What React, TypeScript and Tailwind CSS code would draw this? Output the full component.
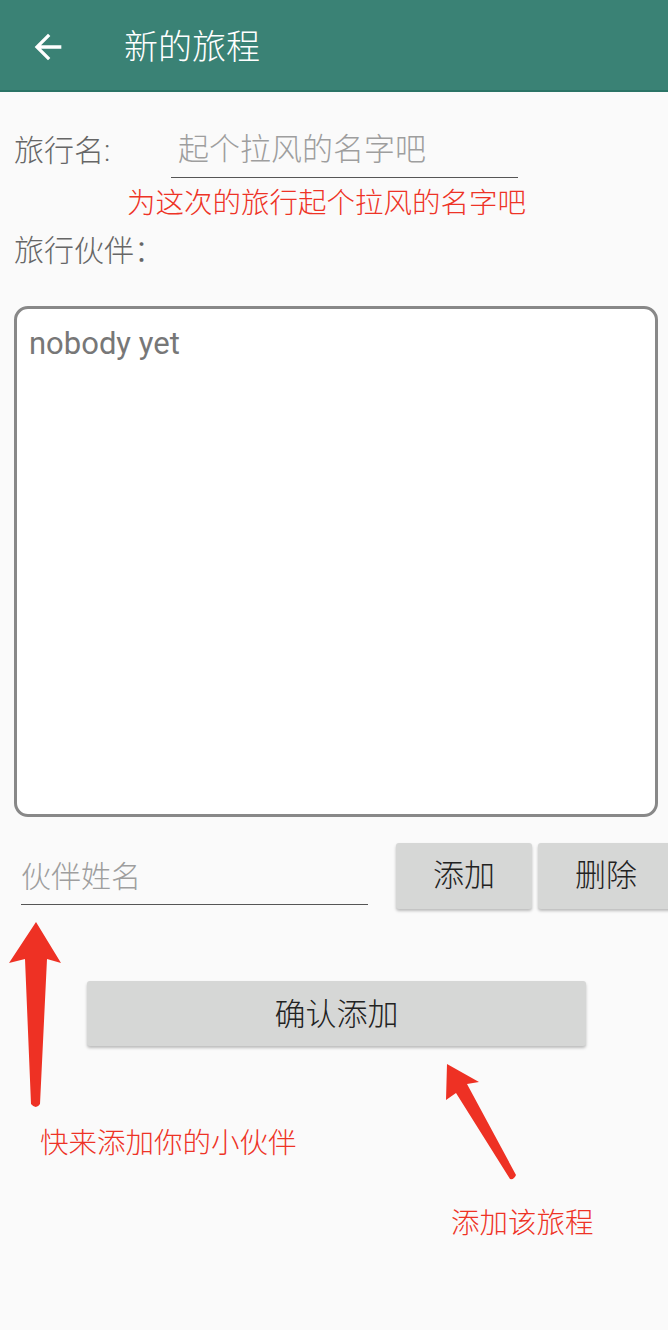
import React from 'react';

const App: React.FC = () => {
  return (
    <div className="relative w-full min-h-[1330px] overflow-hidden bg-[#fafafa] font-['Roboto','Noto_Sans_CJK_SC',sans-serif] font-light">
      {/* 顶部栏 */}
      <div className="flex h-[92px] items-center border-b-2 border-[#2a7466] bg-[#3a8275]">
        <svg className="ml-[28px] mt-[3px] h-[40px] w-[40px]" viewBox="0 0 24 24" fill="white">
          <path d="M20 11H7.83l5.59-5.59L12 4l-8 8 8 8 1.41-1.41L7.83 13H20v-2z" />
        </svg>
        <span className="ml-[56px] mt-[4px] text-[34px] leading-none text-white">新的旅程</span>
      </div>

      <div className="px-[14px]">
        {/* 旅行名 */}
        <div className="mt-[30px] flex h-[56px] items-center">
          <span className="w-[157px] pt-[2px] text-[30px] leading-[36px] text-[#666]">旅行名:</span>
          <div className="flex h-full w-[347px] items-center border-b-[1.5px] border-[#555] pl-[7px] pt-[2px] text-[31px] text-[#9e9e9e]">
            起个拉风的名字吧
          </div>
        </div>
        <div className="mt-[8px] pl-[113px] text-[28.5px] leading-[36px] text-[#ee3326]">为这次的旅行起个拉风的名字吧</div>

        <div className="mt-[11px] text-[30px] leading-[36px] text-[#666]">旅行伙伴：</div>

        {/* 伙伴列表 */}
        <div className="mt-[37px] h-[511px] w-[644px] rounded-[14px] border-[3px] border-[#888] bg-white pl-[12px] pt-[17px]">
          <div className="text-[31px] font-normal leading-[36px] text-[#777]">nobody yet</div>
        </div>

        {/* 添加伙伴 */}
        <div className="mt-[26px] flex h-[66px] w-[700px]">
          <div className="ml-[7px] mt-[6px] flex h-[56px] w-[347px] items-center border-b-[1.5px] border-[#555] text-[30px] text-[#9e9e9e]">
            伙伴姓名
          </div>
          <button className="ml-[28px] h-[66px] w-[136px] rounded-[3px] bg-[#d6d7d6] text-[31px] text-[#222] shadow-[0_2px_3px_rgba(0,0,0,0.25)]">
            添加
          </button>
          <button className="ml-[6px] h-[66px] w-[136px] rounded-[3px] bg-[#d6d7d6] text-[31px] text-[#222] shadow-[0_2px_3px_rgba(0,0,0,0.25)]">
            删除
          </button>
        </div>

        <button className="ml-[73px] mt-[72px] h-[65px] w-[499px] rounded-[3px] bg-[#d6d7d6] pt-[3px] text-[31px] text-[#222] shadow-[0_2px_3px_rgba(0,0,0,0.25)]">
          确认添加
        </button>

        {/* 标注文字 */}
        <div className="mt-[80px] pl-[26px] text-[28.5px] leading-[36px] text-[#ee3326]">快来添加你的小伙伴</div>
        <div className="mt-[44px] pl-[437px] text-[28.5px] leading-[36px] text-[#ee3326]">添加该旅程</div>
      </div>

      {/* 标注箭头 */}
      <svg className="pointer-events-none absolute left-0 top-0" width="668" height="1330" viewBox="0 0 668 1330">
        <path
          d="M36 922 L61 963 L47 959 L40 1104 Q36 1110 31 1104 L25 959 L9 963 Z"
          fill="#ee3124"
        />
        <path
          d="M447 1064 L479 1082 L467 1084 L516 1175 Q514 1180 510 1179 L456 1093 L446 1100 Z"
          fill="#ee3124"
        />
      </svg>
    </div>
  );
};

export default App;
